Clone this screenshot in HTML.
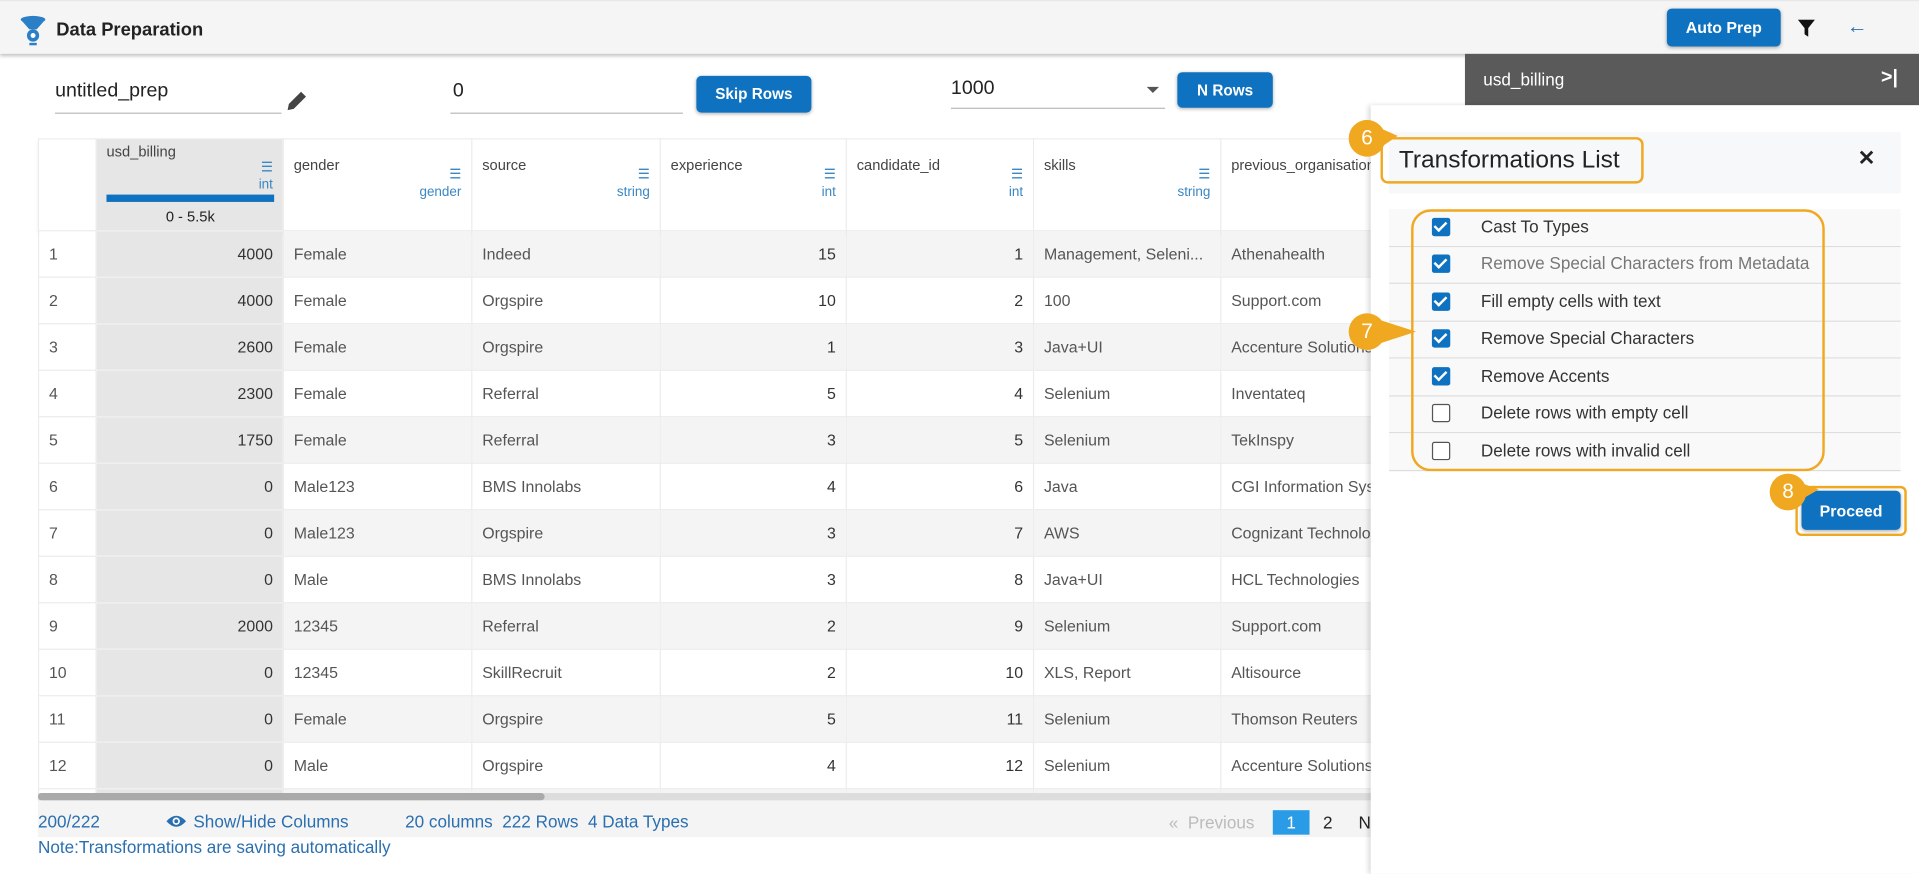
<!DOCTYPE html>
<html><head><meta charset="utf-8"><style>
*{box-sizing:border-box;margin:0;padding:0}
html,body{width:1919px;height:874px;overflow:hidden;background:#fff}
#s{position:absolute;left:0;top:0;width:1568px;height:714px;transform:scale(1.22385);transform-origin:0 0;font-family:"Liberation Sans",sans-serif;color:#333;font-size:13px}
.a{position:absolute}
.btn{position:absolute;background:#0f72c0;color:#fff;border-radius:4px;font-size:12.5px;font-weight:bold;display:flex;align-items:center;justify-content:center;box-shadow:0 1px 3px rgba(0,0,0,.3)}
table{border-collapse:collapse;table-layout:fixed;position:absolute;left:31px;top:113px;width:1110px}
td{height:38px;border:1px solid #ececec;padding:0 8px;font-size:13px;color:#555;white-space:nowrap;overflow:hidden}
td.n{text-align:right;color:#333}
td.u{background:#e6e6e6!important;text-align:right;color:#333}
tr.g td{background:#f4f4f4}
tr td:first-child{background:#fff!important}
th{height:75px;border:1px solid #ececec;font-weight:normal;text-align:left;vertical-align:top;padding:14px 8px 0;font-size:12px;color:#444;position:relative;background:#fff}
th .t{position:absolute;right:8px;top:22px;text-align:right;color:#3a87c4;font-size:11px;line-height:14px}
.chk{position:absolute;left:1170px;width:15px;height:15px;border-radius:2px}
.on{background:#0f72c0}
.on:after{content:"";position:absolute;left:4px;top:1px;width:4px;height:8px;border:solid #fff;border-width:0 2px 2px 0;transform:rotate(45deg)}
.off{border:1.5px solid #555;background:#fff}
.li{position:absolute;left:1135px;width:418px;height:30.5px;border-bottom:1px solid #ddd;background:#f9f9f9}
.lt{position:absolute;left:1210px;font-size:14px;color:#333}
.or{border:2.5px solid #f0a820;position:absolute}
.cir{position:absolute;width:30px;height:30px;border-radius:50%;background:#f0a820;color:#fff;font-size:17px;display:flex;align-items:center;justify-content:center}
</style></head><body><div id="s">
<div class="a" style="left:0;top:0;width:1568px;height:44px;background:#f5f5f5;border-top:1px solid #e8e8e8;box-shadow:0 2px 3px rgba(0,0,0,.25)"></div>
<svg class="a" style="left:15px;top:12px" width="24" height="26" viewBox="0 0 24 26"><ellipse cx="12" cy="4" rx="10" ry="3" fill="#2a7fc6"/><path d="M2 4 L9 12 L15 12 L22 4Z" fill="#2a7fc6"/><circle cx="12" cy="17" r="5" fill="#2a7fc6"/><circle cx="12" cy="17" r="2" fill="#fff"/><rect x="9" y="23" width="6" height="2" fill="#2a7fc6"/></svg>
<div class="a" style="left:46px;top:16px;font-size:15px;font-weight:bold;color:#222">Data Preparation</div>
<div class="btn" style="left:1362px;top:7px;width:93px;height:31px;font-size:13px">Auto Prep</div>
<svg class="a" style="left:1469px;top:16px" width="14" height="14" viewBox="0 0 14 14"><path d="M0 0H14L8.5 7V14L5.5 12V7Z" fill="#111"/></svg>
<div class="a" style="left:1509px;top:12px;font-size:17px;color:#2a6fb0">←</div>
<div class="a" style="left:45px;top:66px;font-size:16px;color:#222">untitled_prep</div>
<div class="a" style="left:45px;top:92px;width:185px;border-top:1px solid #bbb"></div>
<svg class="a" style="left:233px;top:72px" width="20" height="20" viewBox="0 0 20 20"><path d="M2 18 L3 13 L13 3 L17 7 L7 17Z" fill="#444"/></svg>
<div class="a" style="left:370px;top:66px;font-size:16px;color:#222">0</div>
<div class="a" style="left:368px;top:92px;width:190px;border-top:1px solid #bbb"></div>
<div class="btn" style="left:569px;top:62px;width:94px;height:30px">Skip Rows</div>
<div class="a" style="left:777px;top:64px;font-size:16px;color:#222">1000</div>
<div class="a" style="left:937px;top:71px;border:5px solid transparent;border-top-color:#555"></div>
<div class="a" style="left:777px;top:88px;width:175px;border-top:1px solid #bbb"></div>
<div class="btn" style="left:962px;top:59px;width:78px;height:29px">N Rows</div>
<table>
<colgroup><col style="width:47px"><col style="width:153px"><col style="width:154px"><col style="width:154px"><col style="width:152px"><col style="width:153px"><col style="width:153px"><col style="width:144px"></colgroup>
<tr style="box-shadow:0 2px 3px rgba(0,0,0,.15)"><th></th><th style="background:#e6e6e6;padding-top:3px">usd_billing<div class="t" style="top:16px">☰<br>int</div><div class="a" style="left:8px;top:45px;width:137px;height:6px;background:#0f72c0"></div><div class="a" style="left:0;top:56px;width:153px;text-align:center;color:#222">0 - 5.5k</div></th>
<th>gender<div class="t">☰<br>gender</div></th><th>source<div class="t">☰<br>string</div></th><th>experience<div class="t">☰<br>int</div></th><th>candidate_id<div class="t">☰<br>int</div></th><th>skills<div class="t">☰<br>string</div></th><th>previous_organisation<div class="t" style="right:-10px">☰<br>string</div></th></tr>
<tr class="g"><td>1</td><td class="u">4000</td><td>Female</td><td>Indeed</td><td class="n">15</td><td class="n">1</td><td>Management, Seleni...</td><td>Athenahealth</td></tr>
<tr><td>2</td><td class="u">4000</td><td>Female</td><td>Orgspire</td><td class="n">10</td><td class="n">2</td><td>100</td><td>Support.com</td></tr>
<tr class="g"><td>3</td><td class="u">2600</td><td>Female</td><td>Orgspire</td><td class="n">1</td><td class="n">3</td><td>Java+UI</td><td>Accenture Solutions</td></tr>
<tr><td>4</td><td class="u">2300</td><td>Female</td><td>Referral</td><td class="n">5</td><td class="n">4</td><td>Selenium</td><td>Inventateq</td></tr>
<tr class="g"><td>5</td><td class="u">1750</td><td>Female</td><td>Referral</td><td class="n">3</td><td class="n">5</td><td>Selenium</td><td>TekInspy</td></tr>
<tr><td>6</td><td class="u">0</td><td>Male123</td><td>BMS Innolabs</td><td class="n">4</td><td class="n">6</td><td>Java</td><td>CGI Information Sys</td></tr>
<tr class="g"><td>7</td><td class="u">0</td><td>Male123</td><td>Orgspire</td><td class="n">3</td><td class="n">7</td><td>AWS</td><td>Cognizant Technolo</td></tr>
<tr><td>8</td><td class="u">0</td><td>Male</td><td>BMS Innolabs</td><td class="n">3</td><td class="n">8</td><td>Java+UI</td><td>HCL Technologies</td></tr>
<tr class="g"><td>9</td><td class="u">2000</td><td>12345</td><td>Referral</td><td class="n">2</td><td class="n">9</td><td>Selenium</td><td>Support.com</td></tr>
<tr><td>10</td><td class="u">0</td><td>12345</td><td>SkillRecruit</td><td class="n">2</td><td class="n">10</td><td>XLS, Report</td><td>Altisource</td></tr>
<tr class="g"><td>11</td><td class="u">0</td><td>Female</td><td>Orgspire</td><td class="n">5</td><td class="n">11</td><td>Selenium</td><td>Thomson Reuters</td></tr>
<tr><td>12</td><td class="u">0</td><td>Male</td><td>Orgspire</td><td class="n">4</td><td class="n">12</td><td>Selenium</td><td>Accenture Solutions</td></tr>
<tr class="g"><td style="height:12px"></td><td class="u" style="height:12px"></td><td></td><td></td><td></td><td></td><td></td><td></td></tr>
</table>
<div class="a" style="left:31px;top:648px;width:1090px;height:6px;background:#ddd"></div>
<div class="a" style="left:31px;top:648px;width:414px;height:6px;background:#aaa;border-radius:3px"></div>
<div class="a" style="left:31px;top:654px;width:1090px;height:30px;background:#f4f4f4"></div>
<div class="a" style="left:31px;top:663px;font-size:14px;color:#2a6fb0">200/222</div>
<svg class="a" style="left:135px;top:665px" width="18" height="12" viewBox="0 0 18 12"><path d="M1 6Q9 -3 17 6Q9 15 1 6Z" fill="#2a6fb0"/><circle cx="9" cy="6" r="3" fill="#fff"/><circle cx="9" cy="6" r="1.6" fill="#2a6fb0"/></svg>
<div class="a" style="left:158px;top:663px;font-size:14px;color:#2a6fb0">Show/Hide Columns</div>
<div class="a" style="left:331px;top:663px;font-size:14px;color:#2a6fb0">20 columns&nbsp; 222 Rows&nbsp; 4 Data Types</div>
<div class="a" style="left:31px;top:684px;font-size:14px;color:#2a6fb0">Note:Transformations are saving automatically</div>
<div class="a" style="left:955px;top:664px;font-size:14px;color:#bbb">«&nbsp; Previous</div>
<div class="a" style="left:1040px;top:662px;width:30px;height:20px;background:#2a9be6;color:#fff;font-size:14px;text-align:center;line-height:20px">1</div>
<div class="a" style="left:1081px;top:664px;font-size:14px;color:#222">2</div>
<div class="a" style="left:1110px;top:664px;font-size:14px;color:#222">N</div>
<div class="a" style="left:1197px;top:44px;width:371px;height:42px;background:#5a5a5a"></div>
<div class="a" style="left:1212px;top:57px;font-size:14px;color:#fff">usd_billing</div>
<div class="a" style="left:1537px;top:55px;font-size:16px;color:#fff;font-weight:bold">&gt;|</div>
<div class="a" style="left:1120px;top:86px;width:448px;height:628px;background:#fff;box-shadow:-2px 0 4px rgba(0,0,0,.15)"></div>
<div class="a" style="left:1135px;top:108px;width:418px;height:50px;background:#f7f8fa"></div>
<div class="a" style="left:1143px;top:120px;font-size:20px;color:#222">Transformations List</div>
<div class="a" style="left:1518px;top:120px;font-size:17px;font-weight:bold;color:#222">✕</div>
<div class="li" style="top:171px"></div><div class="li" style="top:201.5px"></div><div class="li" style="top:232px"></div><div class="li" style="top:262.5px"></div><div class="li" style="top:293px"></div><div class="li" style="top:323.5px"></div><div class="li" style="top:354px"></div>
<div class="chk on" style="top:178px"></div><div class="lt" style="top:177px">Cast To Types</div>
<div class="chk on" style="top:208px"></div><div class="lt" style="top:207px;color:#777">Remove Special Characters from Metadata</div>
<div class="chk on" style="top:239px"></div><div class="lt" style="top:238px">Fill empty cells with text</div>
<div class="chk on" style="top:269px"></div><div class="lt" style="top:268px">Remove Special Characters</div>
<div class="chk on" style="top:300px"></div><div class="lt" style="top:299px">Remove Accents</div>
<div class="chk off" style="top:330px"></div><div class="lt" style="top:329px">Delete rows with empty cell</div>
<div class="chk off" style="top:361px"></div><div class="lt" style="top:360px">Delete rows with invalid cell</div>
<div class="btn" style="left:1472px;top:401px;width:81px;height:32px;font-size:13px">Proceed</div>
<div class="or" style="left:1128px;top:112px;width:215px;height:38px;border-radius:6px"></div>
<div class="or" style="left:1153px;top:171px;width:338px;height:214px;border-radius:16px"></div>
<div class="or" style="left:1467px;top:397px;width:91px;height:41px;border-radius:5px"></div>
<svg class="a" style="left:1100px;top:96px" width="50" height="36"><path d="M17 4 L42 15 L20 30Z" fill="#f0a820"/></svg>
<div class="cir" style="left:1102px;top:98px">6</div>
<svg class="a" style="left:1100px;top:254px" width="60" height="36"><path d="M17 4 L57 17 L17 30Z" fill="#f0a820"/></svg>
<div class="cir" style="left:1102px;top:256px">7</div>
<svg class="a" style="left:1440px;top:385px" width="50" height="36"><path d="M17 4 L46 15 L20 30Z" fill="#f0a820"/></svg>
<div class="cir" style="left:1446px;top:387px">8</div>
</div></body></html>
